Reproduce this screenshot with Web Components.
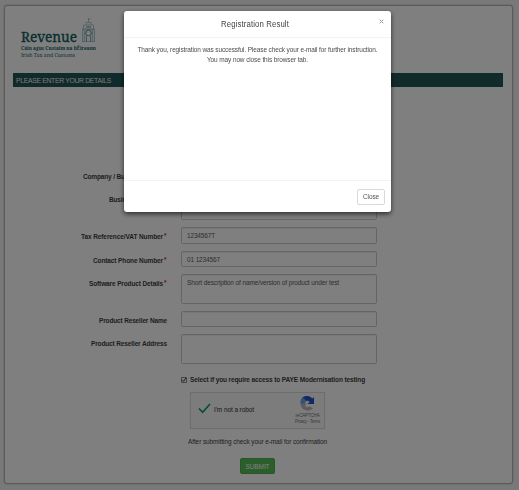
<!DOCTYPE html>
<html lang="en"><head><meta charset="utf-8"><title>Registration</title>
<style>
html,body{margin:0;height:100%;overflow:hidden;background:#f3f3f3}
body{font:6.5px/9px "Liberation Sans",Arial,sans-serif;color:#333}
</style></head><body>
<registration-page></registration-page>
<result-dialog>
  <fit-text slot="title" w="68">Registration Result</fit-text>
  <fit-text w="240">Thank you, registration was successful. Please check your e-mail for further instruction.</fit-text>
  <fit-text w="101">You may now close this browser tab.</fit-text>
</result-dialog>
<script>
// Text run, slightly condensed, whose letter spacing fills the width given in "w".
class FitText extends HTMLElement{
  connectedCallback(){
    if(this.shadowRoot)return;
    this.attachShadow({mode:'open'}).innerHTML='<style>:host{display:block;white-space:nowrap;width:max-content}span{display:inline-block;transform:scaleY(1.12)}</style><span><slot></slot></span>';
    const s=this.shadowRoot.querySelector('span'),w=+this.getAttribute('w');
    if(!w)return;
    const n=this.textContent.length;
    s.style.letterSpacing=((w-s.getBoundingClientRect().width)/n)+'px';
  }
}
class RevenueLogo extends HTMLElement{
  constructor(){super();this.attachShadow({mode:'open'}).innerHTML=`<style>
  :host{display:block;width:80px;height:42px}svg{display:block;overflow:visible}text{font-family:"Noto Serif","Liberation Serif",serif}</style>
  <svg width="80" height="42" viewBox="0 0 80 42">
   <g fill="none" stroke="#9dbdc0" stroke-width=".8">
    <path d="M67.500 1v4M67.500 2h2M65 8V5.500h5V8M62.500 12V8h10v4M61.500 25V12h12v13M61 12.500h13M61 24.500h13"/>
    <path d="M63.500 13v11M71.500 13v11" stroke-width="1.500" stroke="#b4ced0"/>
    <path d="M65.500 25v-6M69.500 25v-6" stroke="#649a9e"/>
    <circle cx="67.500" cy="16" r="2.800" stroke="#397177"/><path d="M65 10h5" stroke="#397177"/>
   </g>
   <g fill="#13615f"><text x="0" y="25" font-size="15" stroke="#13615f" stroke-width=".4" textLength="56" lengthAdjust="spacingAndGlyphs">Revenue</text>
   <text x="0" y="33" font-size="6" font-weight="bold" textLength="75" lengthAdjust="spacingAndGlyphs">Cáin agus Custaim na hÉireann</text>
   <text x="0" y="40" font-size="6" textLength="54" lengthAdjust="spacingAndGlyphs">Irish Tax and Customs</text></g>
  </svg>`}
}
class FormRow extends HTMLElement{
  connectedCallback(){
    if(this.shadowRoot)return;
    const a=n=>this.getAttribute(n)||'';
    this.attachShadow({mode:'open'}).innerHTML=`<style>
    :host{display:grid;grid-template-columns:154px 196px;column-gap:14px;align-items:start}
    .label{display:flex;justify-content:flex-end;gap:1px;padding-top:5px;font-weight:bold;color:#3c3c3c}
    i{font-style:normal;color:#e0202c;width:3px;line-height:8px}
    .field{box-sizing:border-box;height:${a('h')}px;border:1px solid #cacaca;border-radius:1.5px;padding:3px 5px;color:#5c5c5c;box-shadow:inset 0 1px 1px #0001}</style>
    <div class="label"><fit-text w="${a('lw')}">${a('label')}</fit-text>${this.hasAttribute('required')?'<i>*</i>':''}</div>
    <div class="field">${a('value')?`<fit-text w="${a('vw')}">${a('value')}</fit-text>`:''}</div>`;
  }
}
class CaptchaBox extends HTMLElement{
  constructor(){super();this.attachShadow({mode:'open'}).innerHTML=`<style>
  :host{box-sizing:border-box;display:flex;align-items:center;width:135px;height:37px;border:1px solid #dadada;background:#f8f8f8;box-shadow:0 0 1px #0002;padding:0 4px 0 7px}
  .t{margin:-2px 0 0 3px;color:#333}.b{margin-left:auto;display:flex;flex-direction:column;align-items:center;color:#777;font-size:4.5px;line-height:7px}.b .p{font-size:4px;line-height:6px}svg{display:block}</style>
  <svg width="13" height="11" viewBox="0 0 13 11" style="margin-top:-4px"><path d="M1 5.500 4.600 9.300 12 1" fill="none" stroke="#079b60" stroke-width="1.600"/></svg>
  <fit-text class="t" w="40">I'm not a robot</fit-text>
  <div class="b"><svg width="15" height="16" viewBox="0 0 15 16">
   <path d="M2.500 1.500A7 7 0 0 1 12.300 2.500L14 1V8H7.500L9.700 5.900A3.500 3.500 0 0 0 5.800 5Z" fill="#2452c4"/>
   <path d="M2.500 1.200 6.500 5Q4.500 6 4.500 9L.7 8Q-.5 4 2.500 1.200" fill="#6aa0ed"/>
   <path d="M.7 7.500H7L5 9.800A3.500 3.500 0 0 0 10 10.300L12.800 12.500A7.200 7.200 0 0 1 .7 9Z" fill="#b8b8b8"/></svg>
   <fit-text w="24">reCAPTCHA</fit-text><fit-text class="p" w="25">Privacy - Terms</fit-text></div>`}
}
class CheckLine extends HTMLElement{
  constructor(){super();this.attachShadow({mode:'open'}).innerHTML=`<style>:host{display:flex;align-items:center;gap:3px;font-weight:bold;color:#3c3c3c}svg{display:block}</style>
  <svg width="6" height="6" viewBox="0 0 6 6"><path d="M.5.5h5v5h-5z" fill="#fff" stroke="#888"/><path d="m1.200 2.900 1.300 1.400L5 1" fill="none" stroke="#222" stroke-width=".9"/></svg><slot></slot>`}
}
class RegistrationPage extends HTMLElement{
  constructor(){super();this.attachShadow({mode:'open'}).innerHTML=`<style>
  :host{box-sizing:border-box;display:block;height:490px;padding:5px 6px 6px 4px}
  .panel{box-sizing:border-box;height:479px;border:1px solid #b5b5b5;border-radius:3px;background:#fff;box-shadow:0 0 2px #0004;padding:11px 8px 0;display:flex;flex-direction:column}
  revenue-logo{margin-left:8px}
  .bar{height:14px;margin:14px 0 80px;background:#225657;color:#f2f2f2;display:flex;align-items:center;padding-left:3px;font-size:6.8px;flex:none;width:487px}
  .form{display:grid;row-gap:7px}
  check-line{margin:11px 0 0 168px}
  captcha-box{margin:8px 0 0 177px}
  .note{margin:8px 0 0 175px;color:#444}
  .submit{box-sizing:border-box;margin:12px 0 0 227px;width:35px;height:16px;background:#58bb5a;border:1px solid #4cae4c;border-radius:2px;color:#fff;display:flex;align-items:center;justify-content:center}</style>
  <div class="panel"><revenue-logo></revenue-logo>
  <div class="bar"><fit-text w="95">PLEASE ENTER YOUR DETAILS</fit-text></div>
  <div class="form">
  <form-row h="16" lw="80" label="Company / Business Name" required></form-row>
  <form-row h="30" lw="54" label="Business Address" required></form-row>
  <form-row h="17" lw="82" label="Tax Reference/VAT Number" required value="1234567T" vw="28"></form-row>
  <form-row h="16" lw="70" label="Contact Phone Number" required value="01 1234567" vw="33"></form-row>
  <form-row h="30" lw="74" label="Software Product Details" required value="Short description of name/version of product under test" vw="152"></form-row>
  <form-row h="16" lw="68" label="Product Reseller Name"></form-row>
  <form-row h="30" lw="76" label="Product Reseller Address"></form-row></div>
  <check-line><fit-text w="175">Select if you require access to PAYE Modernisation testing</fit-text></check-line>
  <captcha-box></captcha-box>
  <fit-text class="note" w="139">After submitting check your e-mail for confirmation</fit-text>
  <div class="submit"><fit-text w="24">SUBMIT</fit-text></div></div>`}
}
class ResultDialog extends HTMLElement{
  constructor(){super();this.attachShadow({mode:'open'}).innerHTML=`<style>
  :host{position:fixed;inset:0;background:rgba(0,0,0,.5);display:flex;justify-content:center;align-items:flex-start;padding:11px 4px 0 0;box-sizing:border-box}
  .box{box-sizing:border-box;width:267px;height:201px;background:#fff;border-radius:3px;box-shadow:0 2px 5px rgba(0,0,0,.65);display:flex;flex-direction:column}
  header{height:26px;border-bottom:1px solid #f3f3f3;display:grid;grid-template-columns:1fr auto 1fr;align-items:center;font-size:7.8px;color:#444}
  header svg{justify-self:end;margin:-6px 7px 0 0}header ::slotted(*){grid-column:2;margin-right:5px}
  main{flex:1;display:flex;flex-direction:column;align-items:center;padding-top:7px;line-height:9.5px;color:#4c4c4c}
  footer{height:31px;border-top:1px solid #f3f3f3;display:flex;justify-content:flex-end;align-items:center;padding-right:6px}
  .close{box-sizing:border-box;width:28px;height:16px;border:1px solid #d9d9d9;border-radius:2px;display:flex;align-items:center;justify-content:center;color:#555}</style>
  <div class="box"><header><slot name="title"></slot><svg width="5" height="5" viewBox="0 0 5 5"><path d="m.7.7 3.600 3.600m0-3.600L.7 4.300" stroke="#999" fill="none"/></svg></header>
  <main><slot></slot></main><footer><div class="close"><fit-text w="16">Close</fit-text></div></footer></div>`}
}
// fit-text comes last so that it measures with its containers' styles in place.
for(const [n,c] of [['revenue-logo',RevenueLogo],['form-row',FormRow],['captcha-box',CaptchaBox],['check-line',CheckLine],['registration-page',RegistrationPage],['result-dialog',ResultDialog],['fit-text',FitText]])customElements.define(n,c);
</script></body></html>
